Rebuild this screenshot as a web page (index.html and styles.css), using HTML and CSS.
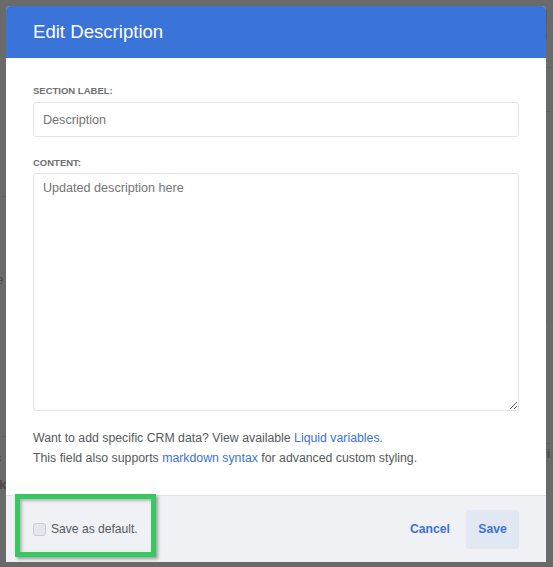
FILE: index.html
```html
<!DOCTYPE html>
<html>
<head>
<meta charset="utf-8">
<link rel="stylesheet" href="styles.css">
</head>
<body>
<div class="page">
  <div class="bg-left">
    <div class="bg-row line">&nbsp;</div>
    <div class="bg-row tall">re</div>
    <div class="bg-row line2">&nbsp;</div>
    <div class="bg-row">ic</div>
    <div class="bg-row bold">ck</div>
    <div class="bg-row">o</div>
  </div>
  <div class="bg-right">
    <div class="thumb"></div>
    <div class="bg-sep"></div>
    <div class="bg-dots"></div>
    <div class="bg-list">
      <div>5.</div><div>ve</div><div>ve</div><div>d:</div><div>0.</div>
    </div>
    <div class="bg-dots second"></div>
    <div class="bg-row bold">Pri</div>
    <div class="bg-row">0.</div>
  </div>
  <div class="overlay"></div>
</div>

<div class="modal">
  <div class="modal-header">
    <h1 class="modal-title">Edit Description</h1>
  </div>
  <div class="modal-body">
    <label class="field-label">SECTION LABEL:</label>
    <input class="text-input" type="text" placeholder="Description">
    <label class="field-label content-label">CONTENT:</label>
    <textarea class="text-area" placeholder="Updated description here"></textarea>
    <p class="help">Want to add specific CRM data? View available <a href="#">Liquid variables.</a><br>This field also supports <a href="#">markdown syntax</a> for advanced custom styling.</p>
  </div>
  <div class="modal-footer">
    <label class="check">
      <span class="box"></span>
      <span class="check-text">Save as default.</span>
    </label>
    <div class="actions">
      <button class="btn btn-link">Cancel</button>
      <button class="btn btn-save">Save</button>
    </div>
  </div>
</div>
<div class="highlight"></div>
</body>
</html>
```
FILE: styles.css
```css
* { box-sizing: border-box; }
html, body { margin: 0; padding: 0; }
body {
  width: 553px;
  height: 567px;
  overflow: hidden;
  position: relative;
  font-family: "Liberation Sans", Arial, sans-serif;
  background: #ffffff;
}
.page {
  position: absolute;
  inset: 0;
  display: flex;
  justify-content: space-between;
  color: #222;
  font-size: 13px;
}
.bg-left {
  width: 20px;
  padding-top: 196px;
  margin-left: -8px;
}
.bg-left .bg-row { height: 20px; line-height: 20px; }
.bg-left .line { border-top: 1px dotted #999; height: 56px; }
.bg-left .tall { height: 184px; padding-top: 18px; }
.bg-left .line2 { border-top: 1px dotted #999; height: 12px; }
.bg-left .bg-row.bold { height: 13px; line-height: 13px; margin-top: 10px; }
.bg-row.bold { font-weight: bold; }
.bg-right {
  width: 20px;
  padding-left: 546px;
  margin-left: -546px;
  box-sizing: content-box;
  padding-top: 8px;
}
.thumb {
  width: 12px; height: 32px; margin-left: 2px;
  background: linear-gradient(180deg, #c9a257, #d8b46c 60%, #3c6fc2);
  border-radius: 2px;
}
.bg-sep { border-top: 1px solid #ccc; margin-top: 27px; height: 44px; }
.bg-dots { border-top: 1px dotted #999; height: 157px; }
.bg-list div { height: 21px; line-height: 21px; }
.bg-dots.second { height: 0; margin-top: 70px; }
.bg-right .bg-row { height: 34px; line-height: 20px; }
.overlay {
  position: absolute;
  inset: 0;
  background: rgba(82, 82, 82, 0.86);
}

.modal {
  position: absolute;
  left: 6px;
  top: 6px;
  width: 540px;
  height: 556px;
  background: #fff;
  border-radius: 4px 4px 0 0;
  display: flex;
  flex-direction: column;
  overflow: hidden;
}
.modal-header {
  height: 52px;
  background: #3b74d9;
  display: flex;
  align-items: center;
  padding: 0 27px;
}
.modal-title {
  margin: 0;
  color: #fff;
  font-size: 18.6px;
  font-weight: normal;
}
.modal-body {
  padding: 27px 27px 0;
  display: flex;
  flex-direction: column;
  flex: 1;
}
.field-label {
  display: block;
  font-size: 9.5px;
  font-weight: bold;
  color: #6d6f73;
  line-height: 12px;
  margin-bottom: 5px;
}
.content-label { margin-top: 20px; margin-bottom: 4px; }
.text-input, .text-area {
  width: 486px;
  border: 1px solid #e3e3e3;
  border-radius: 3px;
  font-family: inherit;
  font-size: 12.6px;
  color: #333;
  background: #fff;
  outline: none;
}
.text-input {
  height: 35px;
  padding: 0 9px;
}
.text-area {
  height: 238px;
  padding: 7px 9px;
  resize: vertical;
}
.text-input::placeholder, .text-area::placeholder { color: #757575; }
.help {
  margin: 17px 0 0;
  font-size: 12.3px;
  line-height: 20px;
  color: #555a60;
}
.help a { color: #3b73d9; text-decoration: none; }
.modal-footer {
  height: 67px;
  border-top: 1px solid #e1e3e6;
  background: #eff1f4;
  display: flex;
  align-items: center;
  justify-content: space-between;
  padding: 0 27px;
}
.check {
  display: flex;
  align-items: center;
  gap: 5px;
}
.box {
  width: 13px;
  height: 13px;
  border: 1px solid #c9ccd1;
  border-radius: 3px;
  background: #e4e8ee;
}
.check-text {
  font-size: 12.1px;
  color: #555a60;
}
.actions {
  display: flex;
  align-items: center;
  gap: 2px;
}
.btn {
  font-family: inherit;
  font-size: 12.2px;
  font-weight: bold;
  color: #3b73d9;
  border: none;
  border-radius: 3px;
  height: 39px;
  cursor: pointer;
}
.btn-link { background: transparent; padding: 0 14px; }
.btn-save { background: #e2e8f3; width: 53px; padding: 0; }
.highlight {
  position: absolute;
  left: 15px;
  top: 494px;
  width: 141px;
  height: 63px;
  border: 5px solid #37c95f;
  box-shadow: 2px 2px 3px rgba(0,0,0,0.35), inset 2px 2px 3px rgba(0,0,0,0.25);
}
```
